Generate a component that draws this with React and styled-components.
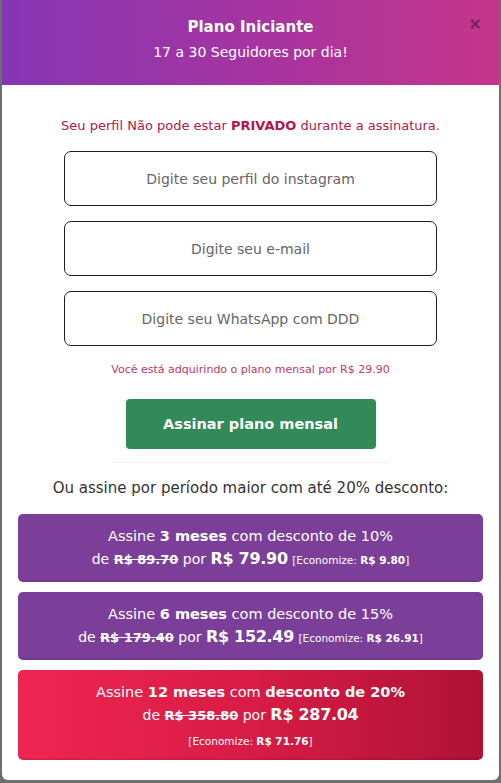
import styled, { createGlobalStyle } from 'styled-components';

const Global = createGlobalStyle`
  html, body {
    margin: 0;
    padding: 0;
    background: #6e6e6e;
  }
  body {
    font-family: "DejaVu Sans", "Noto Sans", sans-serif;
  }
`

const Modal = styled.div`
  margin: 0 2px 4px 2px;
  background: #fff;
  border-radius: 0 0 6px 6px;
  overflow: hidden;
`
const Header = styled.div`
  position: relative;
  height: 85px;
  box-sizing: border-box;
  padding-top: 16px;
  background: linear-gradient(90deg, #8536b4 0%, #a8349f 55%, #c4358a 100%);
  color: #fff;
  text-align: center;
`
const Title = styled.div`
  font-size: 15px;
  font-weight: 700;
  line-height: 22px;
`
const Subtitle = styled.div`
  margin-top: 4px;
  font-size: 14px;
  line-height: 20px;
`
const Close = styled.span`
  position: absolute;
  top: 14px;
  right: 17px;
  font-size: 16px;
  font-weight: 700;
  color: #5b1f4a;
  opacity: 0.8;
  line-height: 20px;
`
const Body = styled.div`
  padding: 31px 16px 20px;
  display: flex;
  flex-direction: column;
  align-items: center;
`
const Warning = styled.p`
  margin: 0 0 16px;
  font-size: 13px;
  line-height: 19px;
  color: #b0174c;
  b { font-weight: 700; }
`
const Field = styled.input`
  box-sizing: border-box;
  width: 373px;
  height: 55px;
  border: 1px solid #1e1e1e;
  border-radius: 7px;
  margin-bottom: 15px;
  font-family: inherit;
  font-size: 14px;
  text-align: center;
  &::placeholder { color: #666; }
`
const Note = styled.p`
  margin: 2px 0 22px;
  font-size: 11px;
  line-height: 14px;
  color: #c0376c;
`
const Submit = styled.button`
  width: 250px;
  height: 50px;
  border: none;
  border-radius: 4px;
  background: #328a59;
  color: #fff;
  font-family: inherit;
  font-size: 14.5px;
  font-weight: 700;
`
const Rule = styled.hr`
  width: 277px;
  margin: 13px 0 0;
  border: none;
  border-top: 1px solid #eee;
`
const Lead = styled.p`
  margin: 15px 0 16px;
  font-size: 15px;
  line-height: 20px;
  color: #333;
`
const Offers = styled.div`
  align-self: stretch;
  display: flex;
  flex-direction: column;
  gap: 10px;
`
const Offer = styled.div`
  box-sizing: border-box;
  height: ${p => (p.$hot ? '90px' : '68px')};
  border-radius: 5px;
  padding: 11px 10px 0;
  background: ${p => (p.$hot ? 'linear-gradient(90deg, #ee2651 0%, #d81c45 50%, #ae1235 100%)' : '#7b3f99')};
  box-shadow: inset 0 -2px 0 rgba(0,0,0,0.08);
  color: #fff;
  text-align: center;
`
const Line = styled.div`
  font-size: 14.5px;
  line-height: 22px;
  b { font-weight: 700; }
`
const Price = styled.div`
  font-size: 14px;
  line-height: 24px;
`
const Old = styled.s`
  font-size: 13px;
  font-weight: 700;
`
const New = styled.b`
  font-size: 16px;
  font-weight: 700;
  letter-spacing: -0.3px;
`
const Save = styled.span`
  font-size: 10.5px;
  b { font-weight: 700; }
`
const SaveLine = styled.div`
  margin-top: 1px;
  font-size: 10.5px;
  line-height: 24px;
  b { font-weight: 700; }
`

const App = () => {
  return (
    <>
      <Global />
      <Modal>
        <Header>
          <Title>Plano Iniciante</Title>
          <Subtitle>17 a 30 Seguidores por dia!</Subtitle>
          <Close>×</Close>
        </Header>
        <Body>
          <Warning>Seu perfil Não pode estar <b>PRIVADO</b> durante a assinatura.</Warning>
          <Field placeholder="Digite seu perfil do instagram" />
          <Field placeholder="Digite seu e-mail" />
          <Field placeholder="Digite seu WhatsApp com DDD" />
          <Note>Você está adquirindo o plano mensal por R$ 29.90</Note>
          <Submit>Assinar plano mensal</Submit>
          <Rule />
          <Lead>Ou assine por período maior com até 20% desconto:</Lead>
          <Offers>
            <Offer>
              <Line>Assine <b>3 meses</b> com desconto de 10%</Line>
              <Price>de <Old>R$ 89.70</Old> por <New>R$ 79.90</New> <Save>[Economize: <b>R$ 9.80</b>]</Save></Price>
            </Offer>
            <Offer>
              <Line>Assine <b>6 meses</b> com desconto de 15%</Line>
              <Price>de <Old>R$ 179.40</Old> por <New>R$ 152.49</New> <Save>[Economize: <b>R$ 26.91</b>]</Save></Price>
            </Offer>
            <Offer $hot>
              <Line>Assine <b>12 meses</b> com <b>desconto de 20%</b></Line>
              <Price>de <Old>R$ 358.80</Old> por <New>R$ 287.04</New></Price>
              <SaveLine>[Economize: <b>R$ 71.76</b>]</SaveLine>
            </Offer>
          </Offers>
        </Body>
      </Modal>
    </>
  )
}

export default App
